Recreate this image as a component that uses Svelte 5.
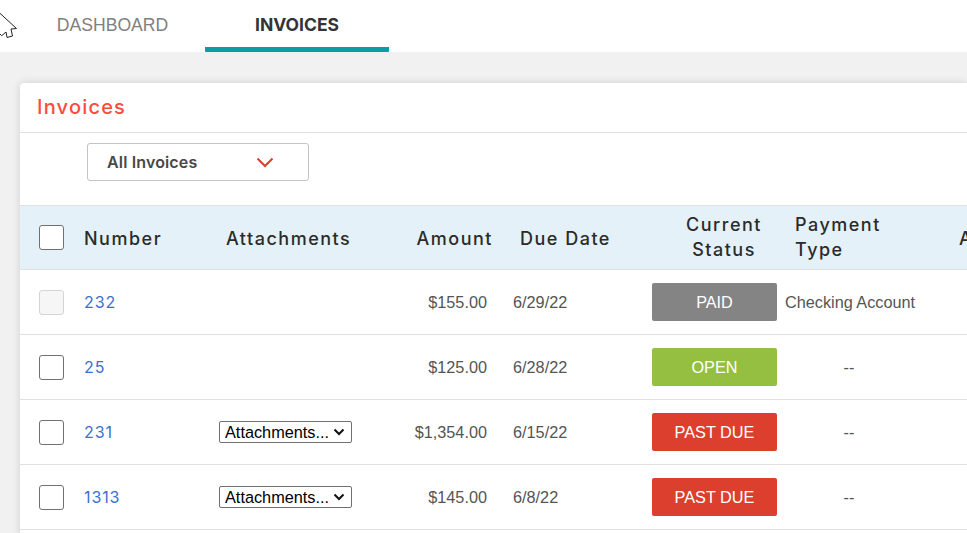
<script>
  const rows = [
    { n: '232', att: false, amt: '$155.00', date: '6/29/22', st: 'PAID', cls: 'paid', pay: 'Checking Account', off: true },
    { n: '25', att: false, amt: '$125.00', date: '6/28/22', st: 'OPEN', cls: 'open', pay: '--' },
    { n: '231', att: true, amt: '$1,354.00', date: '6/15/22', st: 'PAST DUE', cls: 'due', pay: '--' },
    { n: '1313', att: true, amt: '$145.00', date: '6/8/22', st: 'PAST DUE', cls: 'due', pay: '--' }
  ];
</script>

<div class="page">
  <svg class="cursor" width="19" height="40" viewBox="0 0 19 40" aria-hidden="true">
    <path d="M-2 11.500 L16.500 28.500 L11 29 L12.500 36 L7 37.500 L6 32 L1.700 35.700 L-2 32" fill="#fff" stroke="#222" stroke-width="1"/>
  </svg>
  <nav class="tabs">
    <span class="tab">DASHBOARD</span>
    <span class="tab active">INVOICES</span>
  </nav>
  <main class="content">
    <section class="card">
      <h1 class="title">Invoices</h1>
      <div class="filters">
        <div class="filter">
          <span>All Invoices</span>
          <svg width="18" height="11" viewBox="0 0 18 11" aria-hidden="true"><path d="M1.500 1.500 L9 9 L16.500 1.500" fill="none" stroke="#dc3f2e" stroke-width="2"/></svg>
        </div>
      </div>
      <div class="head">
        <span class="box"></span>
        <span class="one">Number</span>
        <span class="one">Attachments</span>
        <span class="one right">Amount</span>
        <span class="one due-h">Due Date</span>
        <span class="two center">Current<br />Status</span>
        <span class="two pay-h">Payment<br />Type</span>
        <span class="one">Account</span>
      </div>
      {#each rows as r}
        <div class="row">
          <span class="box" class:off={r.off}></span>
          <a class="num" href="#top">{r.n}</a>
          <span class="att-cell">
            {#if r.att}
              <select class="att"><option>Attachments...</option></select>
              <svg class="att-arrow" width="12" height="8" viewBox="0 0 12 8" aria-hidden="true"><path d="M1.500 1.500 L6 6 L10.500 1.500" fill="none" stroke="#111" stroke-width="2"/></svg>
            {/if}
          </span>
          <span class="right">{r.amt}</span>
          <span class="date">{r.date}</span>
          <span class="status {r.cls}">{r.st}</span>
          <span class="pay" class:dash={r.pay === '--'}>{r.pay}</span>
        </div>
      {/each}
    </section>
  </main>
</div>

<style>
  :global(body) {
    margin: 0;
    overflow: hidden;
    background: #f1f1f1;
  }
  .page {
    position: relative;
    width: 967px;
    height: 533px;
    overflow: hidden;
    font-family: "Liberation Sans", Arial, sans-serif;
    color: #444;
  }
  .cursor {
    position: absolute;
    left: 0;
    top: 0;
    z-index: 2;
  }
  .tabs {
    display: flex;
    height: 52px;
    padding-left: 20px;
    background: #fff;
    box-sizing: border-box;
  }
  .tab {
    width: 185px;
    box-sizing: border-box;
    text-align: center;
    font-size: 17.6px;
    line-height: 50px;
    color: #7f7f7f;
  }
  .tab.active {
    width: 184px;
    color: #333;
    font-weight: 700;
    font-size: 17.5px;
    font-family: Inter, "Liberation Sans", sans-serif;
    border-bottom: 5px solid #0f9aa8;
    border-radius: 0 0 1px 1px;
  }
  .content {
    padding: 31px 0 0 20px;
  }
  .card {
    background: #fff;
    border-radius: 4px 0 0 0;
    box-shadow: 0 0 8px rgba(0, 0, 0, 0.14);
    height: 470px;
  }
  .title {
    margin: 0;
    height: 49px;
    padding-left: 17px;
    border-bottom: 1px solid #e1e1e1;
    font-family: Inter, sans-serif;
    font-size: 20px;
    font-weight: 500;
    line-height: 48px;
    letter-spacing: 1.2px;
    color: #fa4c40;
  }
  .filters {
    height: 72px;
    padding: 10px 0 0 67px;
    box-sizing: border-box;
  }
  .filter {
    display: flex;
    align-items: center;
    justify-content: space-between;
    width: 222px;
    height: 38px;
    padding: 0 34px 0 19px;
    box-sizing: border-box;
    border: 1px solid #c4c4c4;
    border-radius: 3px;
    font-family: Inter, sans-serif;
    font-size: 16px;
    font-weight: 600;
    letter-spacing: 0.15px;
    color: #484848;
  }
  .head,
  .row {
    display: grid;
    align-items: center;
  }
  .head {
    grid-template-columns: 64px 142px 132px 135px 181px 100px 185px 60px;
    height: 65px;
    box-sizing: border-box;
    border-top: 1px solid #e1e1e1;
    border-bottom: 1px solid #e1e1e1;
    background: #e5f1f8;
    font-family: Inter, sans-serif;
    font-size: 18px;
    font-weight: 500;
    line-height: 25px;
    letter-spacing: 1.5px;
    color: #2b2b2b;
    white-space: nowrap;
  }
  .one {
    padding-top: 1px;
  }
  .two {
    padding-bottom: 1px;
  }
  .due-h {
    padding-left: 27px;
  }
  .pay-h {
    padding-left: 21px;
  }
  .right {
    text-align: right;
  }
  .center {
    text-align: center;
  }
  .row {
    grid-template-columns: 64px 135px 141px 127px 165px 125px 1fr;
    height: 65px;
    box-sizing: border-box;
    border-bottom: 1px solid #e1e1e1;
    font-size: 16.25px;
    line-height: 20px;
    color: #555;
  }
  .box {
    display: block;
    width: 23px;
    height: 23px;
    margin-left: 19px;
    border: 1px solid #707070;
    border-radius: 3px;
    background: #fff;
  }
  .box.off {
    border-color: #d4d4d4;
    background: #f6f6f6;
  }
  .num {
    font-family: Inter, sans-serif;
    font-size: 16px;
    letter-spacing: 0.9px;
    color: #3a6fd0;
    text-decoration: none;
  }
  .date {
    padding-left: 26px;
  }
  .status {
    height: 38px;
    border-radius: 2px;
    line-height: 39px;
    text-align: center;
    color: #fff;
  }
  .paid { background: #848484; }
  .open { background: #95bf41; }
  .due { background: #dc3f2e; }
  .pay {
    padding-left: 8px;
    white-space: nowrap;
  }
  .pay.dash {
    width: 144px;
    padding-left: 0;
    text-align: center;
  }
  .att-cell {
    position: relative;
    display: block;
    height: 22px;
  }
  .att {
    display: block;
    width: 133px;
    height: 22px;
    padding: 0 0 0 5px;
    border: 1px solid #707070;
    border-radius: 2px;
    background: #fff;
    appearance: none;
    font-family: "Liberation Sans", Arial, sans-serif;
    font-size: 16.3px;
    color: #000;
  }
  .att-arrow {
    position: absolute;
    left: 114px;
    top: 7px;
    pointer-events: none;
  }
</style>
